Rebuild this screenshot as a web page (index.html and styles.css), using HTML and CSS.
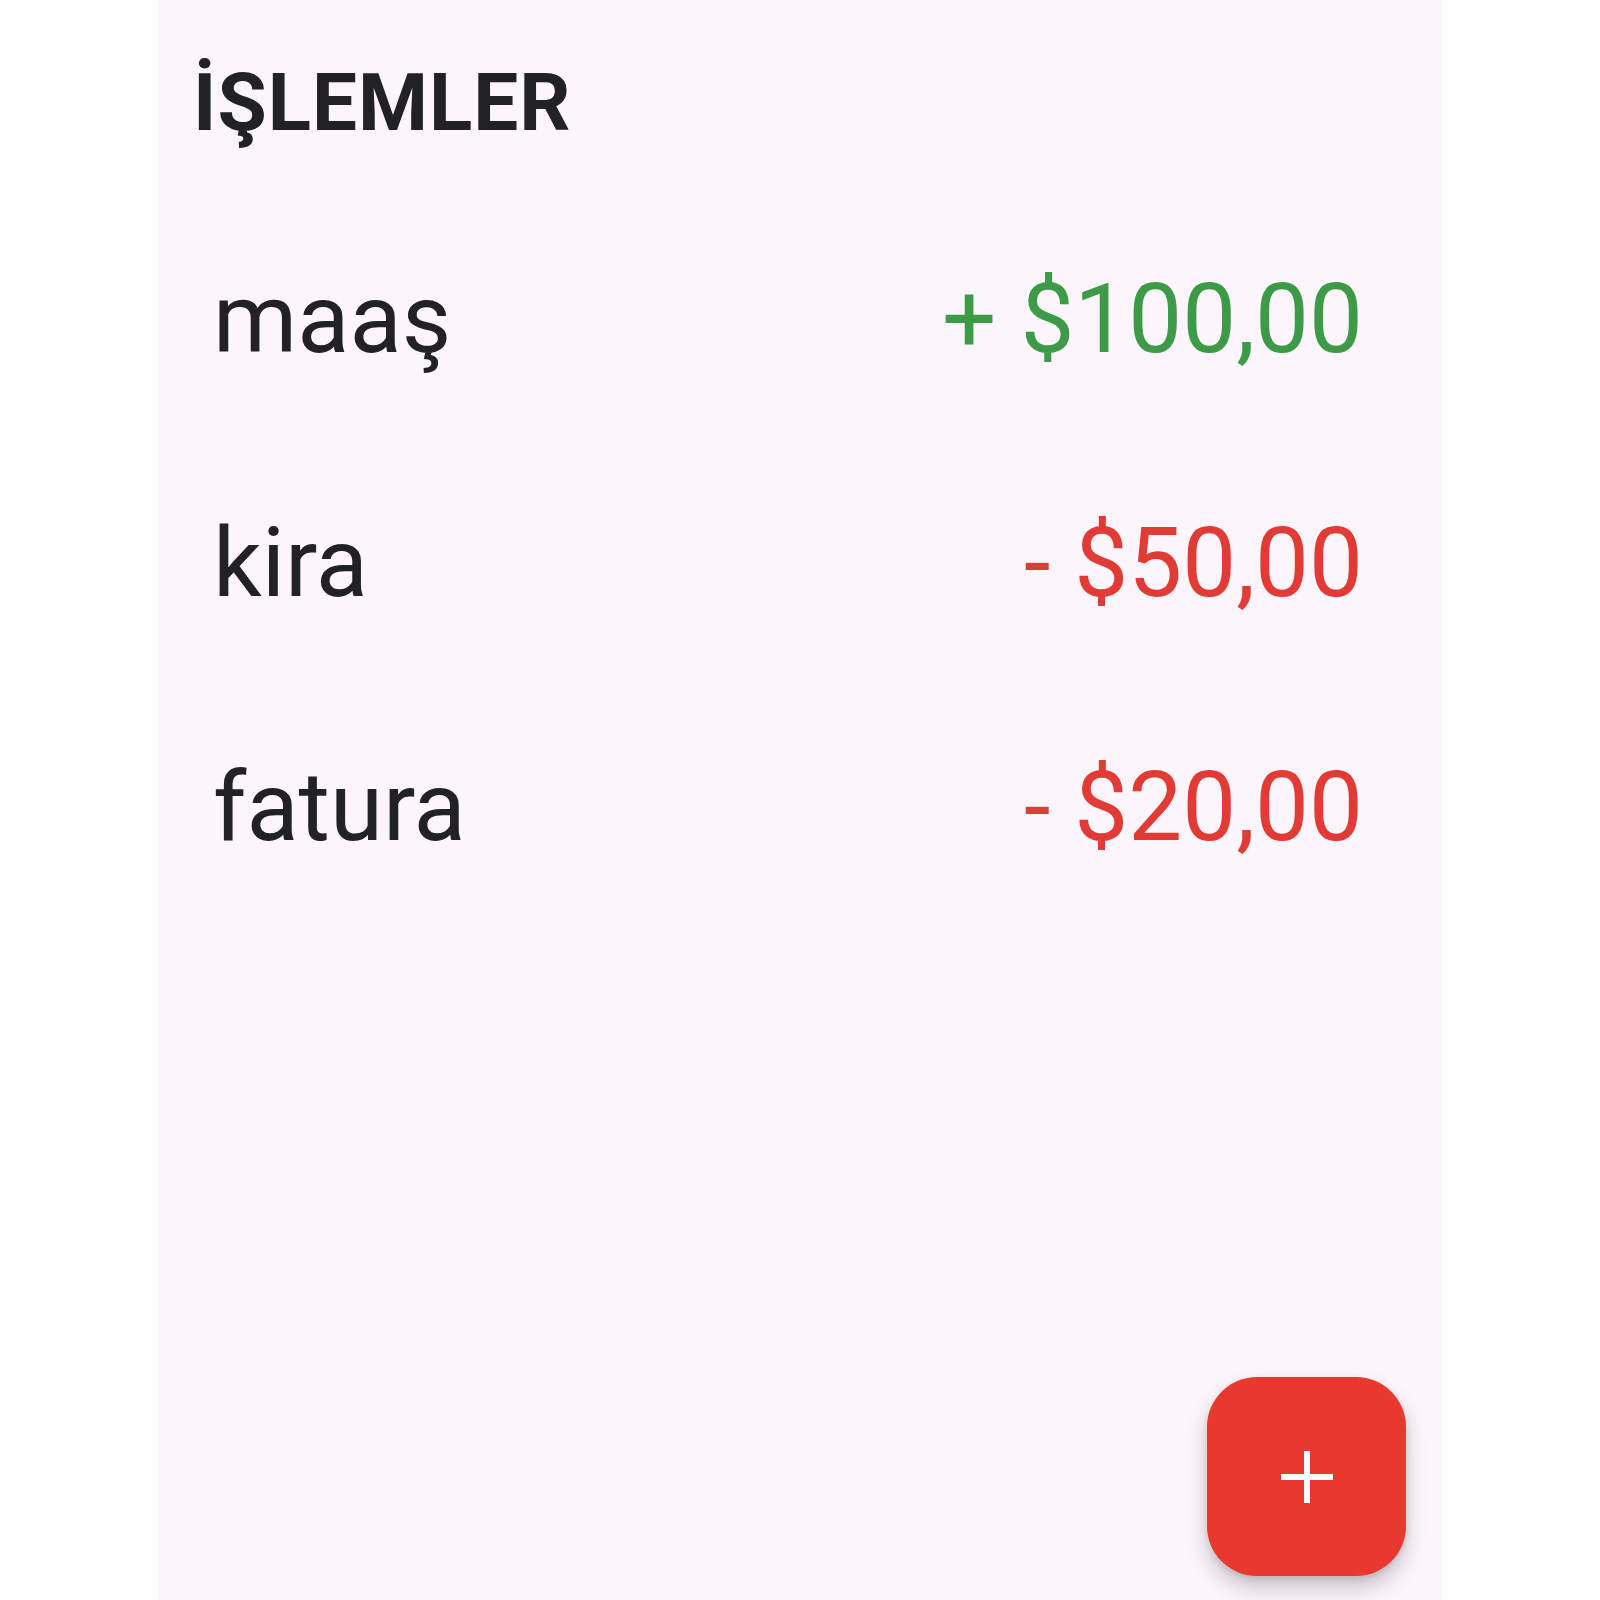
FILE: index.html
```html
<!DOCTYPE html>
<html lang="tr">
<head>
<meta charset="utf-8">
<title>İşlemler</title>
<link rel="stylesheet" href="styles.css">
</head>
<body>
<main class="screen">
  <h1 class="title">İŞLEMLER</h1>
  <ul class="list">
    <li class="row"><span class="name">maaş</span><span class="amount income">+ $100,00</span></li>
    <li class="row"><span class="name">kira</span><span class="amount expense">- $50,00</span></li>
    <li class="row"><span class="name">fatura</span><span class="amount expense">- $20,00</span></li>
  </ul>
  <button class="fab" aria-label="Ekle">
    <svg width="54" height="54" viewBox="0 0 54 54" aria-hidden="true">
      <path d="M27 1V53M1 27H53" stroke="#ffffff" stroke-width="6" fill="none"/>
    </svg>
  </button>
</main>
</body>
</html>
```
FILE: styles.css
```css
html, body {
  margin: 0;
  padding: 0;
  background: #ffffff;
}
body {
  font-family: Roboto, "Noto Sans", "Liberation Sans", sans-serif;
  color: #1f1e21;
}
.screen {
  position: relative;
  box-sizing: border-box;
  width: 1284px;
  min-height: 1600px;
  margin-left: 158px;
  background: #fcf5fb;
  padding: 55px 79px 0 35px;
}
.title {
  margin: 0;
  font-size: 80px;
  line-height: 96px;
  font-weight: 700;
  letter-spacing: 1px;
  color: #222124;
}
.list {
  list-style: none;
  margin: 46px 0 0 0;
  padding: 0 0 0 20px;
}
.row {
  display: flex;
  justify-content: space-between;
  align-items: center;
  height: 244px;
  font-size: 96px;
  line-height: 244px;
}
.name {
  color: #222124;
}
.amount.income {
  color: #3d9a47;
}
.amount.expense {
  color: #e23a34;
}
.fab {
  position: absolute;
  right: 36px;
  bottom: 24px;
  width: 199px;
  height: 199px;
  border: none;
  border-radius: 50px;
  background: #e8392e;
  display: flex;
  align-items: center;
  justify-content: center;
  padding: 0;
  box-shadow: 0 12px 22px rgba(0, 0, 0, 0.2), 0 3px 6px rgba(0, 0, 0, 0.1);
}
```
